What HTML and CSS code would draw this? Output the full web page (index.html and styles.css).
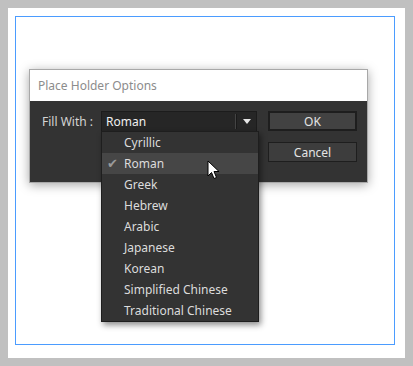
FILE: index.html
```html
<!DOCTYPE html>
<html lang="en">
<head>
  <meta charset="UTF-8">
  <title>Place Holder Options</title>
  <link rel="stylesheet" href="styles.css">
</head>
<body>
  <div class="sheet">
    <div class="frame">
      <!-- Dialog -->
      <div class="dialog">
        <div class="dialog-title">Place Holder Options</div>
        <div class="dialog-body">
          <div class="field">
            <span class="field-label">Fill With :</span>
            <div class="select">
              <span class="select-value">Roman</span>
              <span class="select-divider"></span>
              <span class="select-arrow"></span>

              <!-- Open dropdown list -->
              <ul class="menu">
                <li>Cyrillic</li>
                <li class="checked">Roman</li>
                <li>Greek</li>
                <li>Hebrew</li>
                <li>Arabic</li>
                <li>Japanese</li>
                <li>Korean</li>
                <li>Simplified Chinese</li>
                <li>Traditional Chinese</li>
              </ul>
              <svg class="cursor" width="13" height="20" viewBox="0 0 13 20">
                <path d="M1 1 L1 16 L4.5 12.5 L7 18.5 L9.5 17.5 L7 11.5 L12 11.5 Z" fill="#fff" stroke="#000" stroke-width="1"/>
              </svg>
            </div>
          </div>
          <div class="buttons">
            <button class="btn btn-default">OK</button>
            <button class="btn">Cancel</button>
          </div>
        </div>
      </div>
    </div>
  </div>
</body>
</html>
```

FILE: styles.css
```css
* {
  margin: 0;
  padding: 0;
  box-sizing: border-box;
}

html, body {
  height: 100%;
}

body {
  background: #c0c0c0;
  padding: 8px;
  font-family: "Noto Sans", "Open Sans", sans-serif;
  font-size: 12px;
  overflow: hidden;
}

/* White page with blue frame */
.sheet {
  width: 397px;
  height: 350px;
  background: #fff;
  padding: 8px 0 0 7px;
}

.frame {
  width: 380px;
  height: 329px;
  border: 1px solid #4b9cff;
  padding: 52px 0 0 13px;
}

/* Dialog */
.dialog {
  width: 339px;
  border: 1px solid #a8a8a8;
  box-shadow: 0 2px 10px rgba(0, 0, 0, 0.35);
}

.dialog-title {
  height: 31px;
  background: #fff;
  color: #8c8c8c;
  padding: 7px 0 0 8px;
  font-size: 12px;
}

.dialog-body {
  background: #333;
  height: 81px;
  display: flex;
  justify-content: space-between;
  padding: 10px 10px 0 12px;
}

.field {
  display: flex;
  align-items: flex-start;
  gap: 8px;
}

.field-label {
  color: #d4d4d4;
  line-height: 19px;
  padding-top: 1px;
}

.select {
  position: relative;
  width: 156px;
  height: 21px;
  background: #262626;
  border: 1px solid #1c1c1c;
  display: flex;
  align-items: center;
}

.select-value {
  flex: 1;
  color: #f0f0f0;
  padding-left: 4px;
  line-height: 19px;
}

.select-divider {
  width: 2px;
  height: 15px;
  border-left: 1px solid #444;
  border-right: 1px solid #1a1a1a;
  margin-right: 6px;
}

.select-arrow {
  width: 0;
  height: 0;
  border-left: 4px solid transparent;
  border-right: 4px solid transparent;
  border-top: 5px solid #e6e6e6;
  margin-right: 5px;
}

/* Dropdown list */
.menu {
  position: absolute;
  top: 19px;
  left: -1px;
  width: 158px;
  list-style: none;
  background: #333;
  border: 1px solid #1e1e1e;
  box-shadow: 2px 3px 6px rgba(0, 0, 0, 0.45);
  z-index: 5;
}

.menu li {
  height: 21px;
  line-height: 21px;
  padding-left: 22px;
  color: #dcdcdc;
  position: relative;
}

.menu li.checked {
  background: #464646;
}

.menu li.checked::before {
  content: "\2714";
  position: absolute;
  left: 5px;
  top: 0;
  color: #9a9a9a;
  font-family: "DejaVu Sans", sans-serif;
  font-size: 13px;
}

.cursor {
  position: absolute;
  left: 105px;
  top: 48px;
  z-index: 6;
}

/* Buttons */
.buttons {
  display: flex;
  flex-direction: column;
  gap: 11px;
}

.btn {
  width: 89px;
  height: 20px;
  background: #3d3d3d;
  border: 1px solid #1e1e1e;
  color: #e4e4e4;
  font-family: inherit;
  font-size: 12px;
}

.btn-default {
  border: 2px solid #1e1e1e;
  background: #424242;
}
```
